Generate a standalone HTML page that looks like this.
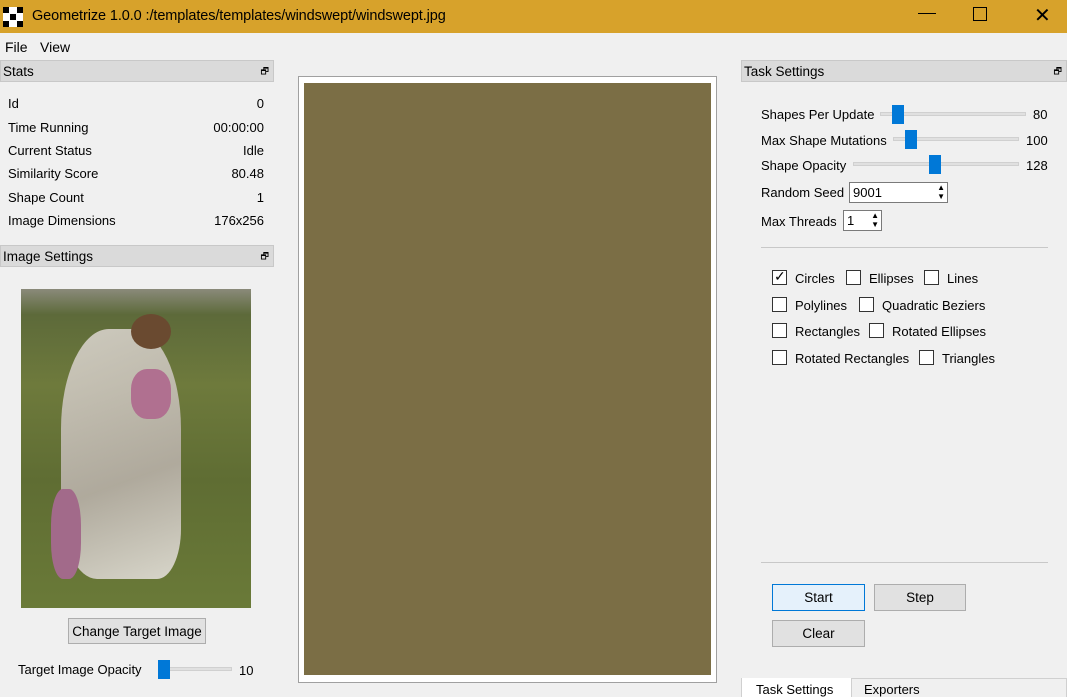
<!DOCTYPE html>
<html><head><style>
*{margin:0;padding:0;box-sizing:border-box}
body{width:1067px;height:697px;overflow:hidden;background:#f0f0f0;font-family:"Liberation Sans",sans-serif;font-size:13px;color:#000;position:relative}
.a{position:absolute}
.hdr{position:absolute;height:22px;background:#dadada;border:1px solid #c8c8c8;padding:3px 2px;font-size:13.5px}
.hdr i{position:absolute;right:4px;top:3px;font-style:normal;font-size:9px}
.row{position:absolute;left:8px;width:256px;display:flex;justify-content:space-between}
.sl{position:absolute;height:4px;background:#e0e0e0;border:1px solid #d0d0d0}
.th{position:absolute;width:12px;height:19px;background:#0078d7;top:-8px}
.cb{position:absolute;width:15px;height:15px;border:1px solid #333;background:#fff}
.btn{position:absolute;height:27px;background:#e1e1e1;border:1px solid #adadad;text-align:center;line-height:25px;font-size:13.5px}
</style></head><body>
<div class="a" style="left:0;top:0;width:1067px;height:33px;background:#d7a22b"></div>
<div class="a" style="left:3px;top:7px;width:20px;height:20px;background:#fff">
<div class="a" style="left:0;top:0;width:6px;height:6px;background:#000"></div>
<div class="a" style="left:7px;top:7px;width:6px;height:6px;background:#000"></div>
<div class="a" style="left:14px;top:0;width:6px;height:6px;background:#000"></div>
<div class="a" style="left:0;top:14px;width:6px;height:6px;background:#000"></div>
<div class="a" style="left:14px;top:14px;width:6px;height:6px;background:#000"></div>
</div>
<div class="a" style="left:32px;top:8px;font-size:14.5px;letter-spacing:-0.1px">Geometrize 1.0.0 :/templates/templates/windswept/windswept.jpg</div>
<div class="a" style="left:918px;top:13px;width:18px;height:1px;background:#000"></div>
<div class="a" style="left:973px;top:7px;width:14px;height:14px;border:1px solid #000"></div>
<div class="a" style="left:1034px;top:3px;font-size:20px">✕</div>
<div class="a" style="left:5px;top:39px;font-size:14px">File</div>
<div class="a" style="left:40px;top:39px;font-size:14px">View</div>

<div class="hdr" style="left:0;top:60px;width:274px">Stats<i>🗗</i></div>
<div class="row" style="top:96px"><span>Id</span><span>0</span></div>
<div class="row" style="top:120px"><span>Time Running</span><span>00:00:00</span></div>
<div class="row" style="top:143px"><span>Current Status</span><span>Idle</span></div>
<div class="row" style="top:166px"><span>Similarity Score</span><span>80.48</span></div>
<div class="row" style="top:190px"><span>Shape Count</span><span>1</span></div>
<div class="row" style="top:213px"><span>Image Dimensions</span><span>176x256</span></div>
<div class="hdr" style="left:0;top:245px;width:274px">Image Settings<i>🗗</i></div>
<div class="a" style="left:21px;top:289px;width:230px;height:319px;background:linear-gradient(180deg,#8a8a7a 0%,#5d6a3a 8%,#6e7a3c 30%,#5f6d33 60%,#6a7a38 100%)">
<div class="a" style="left:40px;top:40px;width:120px;height:250px;border-radius:40% 40% 20% 30%;background:linear-gradient(160deg,#d9d4cc,#b8b0a8 60%,#e4e0da);opacity:.9"></div>
<div class="a" style="left:110px;top:80px;width:40px;height:50px;background:#b07090;border-radius:40%"></div>
<div class="a" style="left:110px;top:25px;width:40px;height:35px;background:#6a4a30;border-radius:50%"></div>
<div class="a" style="left:30px;top:200px;width:30px;height:90px;background:#a26a8a;border-radius:40%"></div>
</div>
<div class="btn" style="left:68px;top:618px;width:138px;height:26px">Change Target Image</div>
<div class="a" style="left:18px;top:662px">Target Image Opacity</div>
<div class="sl" style="left:158px;top:667px;width:74px"><div class="th" style="left:-1px"></div></div>
<div class="a" style="left:239px;top:663px">10</div>

<div class="a" style="left:298px;top:76px;width:419px;height:607px;background:#fff;border:1px solid #a0a0a0"></div>
<div class="a" style="left:304px;top:83px;width:407px;height:592px;background:#7b6e45"></div>

<div class="hdr" style="left:741px;top:60px;width:326px">Task Settings<i>🗗</i></div>
<div class="a" style="left:761px;top:107px">Shapes Per Update</div>
<div class="sl" style="left:880px;top:112px;width:146px"><div class="th" style="left:11px"></div></div>
<div class="a" style="left:1033px;top:107px">80</div>
<div class="a" style="left:761px;top:133px">Max Shape Mutations</div>
<div class="sl" style="left:893px;top:137px;width:126px"><div class="th" style="left:11px"></div></div>
<div class="a" style="left:1026px;top:133px">100</div>
<div class="a" style="left:761px;top:158px">Shape Opacity</div>
<div class="sl" style="left:853px;top:162px;width:166px"><div class="th" style="left:75px"></div></div>
<div class="a" style="left:1026px;top:158px">128</div>
<div class="a" style="left:761px;top:185px">Random Seed</div>
<div class="a" style="left:849px;top:182px;width:99px;height:21px;background:#fff;border:1px solid #7a7a7a;padding:2px 3px;font-size:13px">9001<span style="position:absolute;right:2px;top:0;font-size:8px;line-height:9px">▲<br>▼</span></div>
<div class="a" style="left:761px;top:214px">Max Threads</div>
<div class="a" style="left:843px;top:210px;width:39px;height:21px;background:#fff;border:1px solid #7a7a7a;padding:2px 3px;font-size:13px">1<span style="position:absolute;right:2px;top:0;font-size:8px;line-height:9px">▲<br>▼</span></div>
<div class="a" style="left:761px;top:247px;width:287px;height:1px;background:#c8c8c8"></div>

<div class="cb" style="left:772px;top:270px"><span style="position:absolute;left:1px;top:-3px;font-size:14px">✓</span></div><div class="a" style="left:795px;top:271px">Circles</div>
<div class="cb" style="left:846px;top:270px"></div><div class="a" style="left:869px;top:271px">Ellipses</div>
<div class="cb" style="left:924px;top:270px"></div><div class="a" style="left:947px;top:271px">Lines</div>
<div class="cb" style="left:772px;top:297px"></div><div class="a" style="left:795px;top:298px">Polylines</div>
<div class="cb" style="left:859px;top:297px"></div><div class="a" style="left:882px;top:298px">Quadratic Beziers</div>
<div class="cb" style="left:772px;top:323px"></div><div class="a" style="left:795px;top:324px">Rectangles</div>
<div class="cb" style="left:869px;top:323px"></div><div class="a" style="left:892px;top:324px">Rotated Ellipses</div>
<div class="cb" style="left:772px;top:350px"></div><div class="a" style="left:795px;top:351px">Rotated Rectangles</div>
<div class="cb" style="left:919px;top:350px"></div><div class="a" style="left:942px;top:351px">Triangles</div>

<div class="a" style="left:761px;top:562px;width:287px;height:1px;background:#c8c8c8"></div>
<div class="btn" style="left:772px;top:584px;width:93px;background:#e5f1fb;border-color:#0078d7">Start</div>
<div class="btn" style="left:874px;top:584px;width:92px">Step</div>
<div class="btn" style="left:772px;top:620px;width:93px">Clear</div>
<div class="a" style="left:741px;top:678px;width:110px;height:19px;background:#fff;border-left:1px solid #d0d0d0"></div>
<div class="a" style="left:756px;top:682px">Task Settings</div>
<div class="a" style="left:851px;top:678px;width:216px;height:19px;background:#f0f0f0;border:1px solid #d0d0d0;border-bottom:none"></div>
<div class="a" style="left:864px;top:682px">Exporters</div>
</body></html>
